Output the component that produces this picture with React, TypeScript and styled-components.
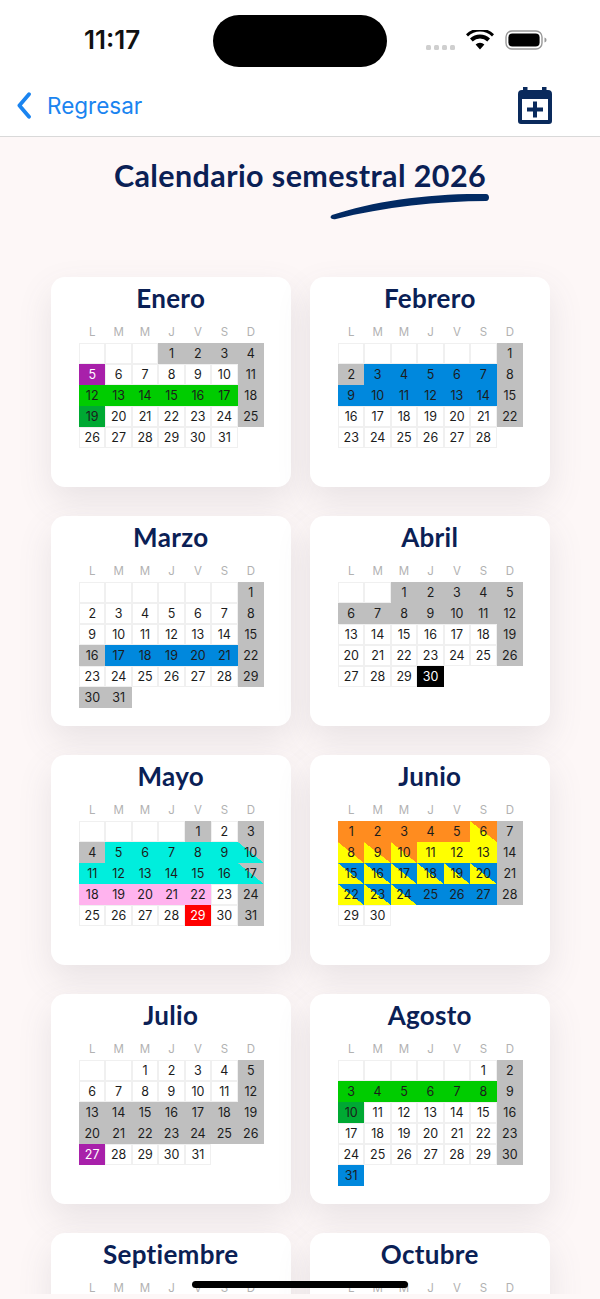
import styled, { createGlobalStyle } from "styled-components";

const GlobalStyle = createGlobalStyle`
  html, body {
    margin: 0;
    padding: 0;
    background: #fdf7f7;
  }
  * {
    box-sizing: border-box;
  }
`;

type Kind =
  | "plain"
  | "gray"
  | "purple"
  | "green"
  | "darkgreen"
  | "blue"
  | "black"
  | "cyan"
  | "pink"
  | "red"
  | "orange"
  | "yellow"
  | "yelloworange"
  | "yellowblue"
  | "cyangray";

const fills: Record<Kind, string> = {
  plain: "#fff",
  gray: "#bfbfbf",
  purple: "#a820aa",
  green: "#00cc00",
  darkgreen: "#00a933",
  blue: "#0088dd",
  black: "#000",
  cyan: "#00eedd",
  pink: "#ffb3ee",
  red: "#ff0000",
  orange: "#ff8c1f",
  yellow: "#ffff00",
  yelloworange: "linear-gradient(to bottom left, #ff8c1f 50%, #ffff00 50.5%)",
  yellowblue: "linear-gradient(to bottom left, #0088dd 50%, #ffff00 50.5%)",
  cyangray: "linear-gradient(to bottom left, #bfbfbf 50%, #00eedd 50.5%)",
};

const Page = styled.div`
  position: relative;
  width: 600px;
  height: 1299px;
  display: flex;
  flex-direction: column;
  overflow: hidden;
  background: #fdf7f7;
  font-family: Lato, "Liberation Sans", sans-serif;
`;

const StatusBar = styled.div`
  height: 78px;
  flex-shrink: 0;
  background: #fff;
  display: flex;
  align-items: flex-start;
  padding: 15px 52px 0 84px;
`;

const Time = styled.div`
  width: 129px;
  margin-top: 9px;
  font-family: Inter, sans-serif;
  font-size: 26px;
  line-height: 32px;
  font-weight: 600;
  color: #111;
`;

const Island = styled.div`
  width: 174px;
  height: 52px;
  border-radius: 26px;
  background: #000;
`;

const StatusIcons = styled.div`
  flex: 1;
  height: 40px;
  margin-top: 5px;
  display: flex;
  align-items: center;
  justify-content: flex-end;
`;

const Dots = styled.div`
  display: flex;
  gap: 3px;
  margin: 14px 11px 0 0;
`;

const Dot = styled.span`
  width: 5px;
  height: 5px;
  border-radius: 1.5px;
  background: #cfcfcf;
`;

const NavBar = styled.div`
  height: 59px;
  flex-shrink: 0;
  background: #fff;
  border-bottom: 1px solid #d9d9d9;
  display: flex;
  align-items: center;
  justify-content: space-between;
  padding: 0 48px 4px 17px;
`;

const BackLink = styled.div`
  display: flex;
  align-items: center;
  gap: 16px;
  color: #1a84f0;
  font-family: Inter, sans-serif;
  font-size: 22.5px;
`;

const Scroller = styled.div`
  flex: 1;
  overflow: hidden;
`;

const Heading = styled.div`
  position: relative;
  height: 140px;
  padding-top: 20px;
  text-align: center;
  color: #0a2055;
  font-size: 30.5px;
  line-height: 36px;
  font-weight: 700;
  letter-spacing: 0.4px;
`;

const Swoosh = styled.svg`
  position: absolute;
  left: 328px;
  top: 52px;
`;

const Months = styled.div`
  display: grid;
  grid-template-columns: repeat(2, 239.5px);
  gap: 29px 19.5px;
  padding-left: 51px;
`;

const Card = styled.div`
  height: 210px;
  background: #fff;
  border-radius: 14px;
  padding-top: 6px;
  box-shadow: 0 14px 34px rgba(90, 90, 110, 0.13);
`;

const MonthName = styled.div`
  text-align: center;
  color: #0a2055;
  font-size: 26px;
  line-height: 30px;
  font-weight: 700;
  letter-spacing: 0.3px;
`;

const Weekdays = styled.div`
  display: grid;
  grid-template-columns: repeat(7, 1fr);
  width: 185px;
  margin: 11px 0 0 28px;
  height: 19px;
`;

const Weekday = styled.span`
  text-align: center;
  color: #b2b2b2;
  font-family: Inter, sans-serif;
  font-size: 11.5px;
  line-height: 16px;
`;

const Days = styled.div`
  display: grid;
  grid-template-columns: repeat(7, 1fr);
  grid-auto-rows: 21px;
  width: 185px;
  margin-left: 28px;
`;

const Day = styled.div<{ $kind: Kind }>`
  display: flex;
  align-items: center;
  justify-content: center;
  font-family: Inter, sans-serif;
  font-size: 12.5px;
  color: ${(p) =>
    p.$kind === "purple" || p.$kind === "black" || p.$kind === "red"
      ? "#fff"
      : "#1c1c1c"};
  background: ${(p) => fills[p.$kind]};
  border: ${(p) => (p.$kind === "plain" ? "1px solid #f0f0f0" : "none")};
`;

const HomeBar = styled.div`
  position: absolute;
  left: 192px;
  top: 1281px;
  width: 216px;
  height: 7px;
  border-radius: 4px;
  background: #000;
`;

const PageFoot = styled.div`
  height: 5px;
  flex-shrink: 0;
  background: #fdf7f7;
`;

const weekdays = ["L", "M", "M", "J", "V", "S", "D"];

// day number -> kind, anything missing is a plain white day
function range(from: number, to: number, kind: Kind) {
  const out: Record<number, Kind> = {};
  for (let d = from; d <= to; d++) out[d] = kind;
  return out;
}

const grays = (days: number[]) =>
  Object.fromEntries(days.map((d) => [d, "gray" as Kind]));

const months: {
  name: string;
  offset: number;
  length: number;
  kinds: Record<number, Kind>;
}[] = [
  {
    name: "Enero",
    offset: 3,
    length: 31,
    kinds: {
      ...grays([1, 2, 3, 4, 11, 18, 25]),
      5: "purple",
      ...range(12, 17, "green"),
      19: "darkgreen",
    },
  },
  {
    name: "Febrero",
    offset: 6,
    length: 28,
    kinds: {
      ...grays([1, 2, 8, 15, 22]),
      ...range(3, 7, "blue"),
      ...range(9, 14, "blue"),
    },
  },
  {
    name: "Marzo",
    offset: 6,
    length: 31,
    kinds: {
      ...grays([1, 8, 15, 16, 22, 29, 30, 31]),
      ...range(17, 21, "blue"),
    },
  },
  {
    name: "Abril",
    offset: 2,
    length: 30,
    kinds: {
      ...range(1, 12, "gray"),
      ...grays([19, 26]),
      30: "black",
    },
  },
  {
    name: "Mayo",
    offset: 4,
    length: 31,
    kinds: {
      ...grays([1, 3, 4, 24, 31]),
      ...range(5, 9, "cyan"),
      10: "cyangray",
      ...range(11, 16, "cyan"),
      17: "cyangray",
      ...range(18, 22, "pink"),
      29: "red",
    },
  },
  {
    name: "Junio",
    offset: 0,
    length: 30,
    kinds: {
      ...range(1, 5, "orange"),
      6: "yelloworange",
      ...grays([7, 14, 21, 28]),
      ...range(8, 10, "yelloworange"),
      ...range(11, 13, "yellow"),
      ...range(15, 20, "yellowblue"),
      ...range(22, 24, "yellowblue"),
      ...range(25, 27, "blue"),
    },
  },
  {
    name: "Julio",
    offset: 2,
    length: 31,
    kinds: {
      ...grays([5, 12]),
      ...range(13, 26, "gray"),
      27: "purple",
    },
  },
  {
    name: "Agosto",
    offset: 5,
    length: 31,
    kinds: {
      ...grays([2, 9, 16, 23, 30]),
      ...range(3, 8, "green"),
      10: "darkgreen",
      31: "blue",
    },
  },
  // only the weekday row of these two is on screen
  { name: "Septiembre", offset: 0, length: 0, kinds: {} },
  { name: "Octubre", offset: 0, length: 0, kinds: {} },
];

function WifiIcon() {
  return (
    <svg width="28" height="20" viewBox="0 0 28 20">
      <path
        d="M14 19.5 9.6 14.6a6.4 6.4 0 0 1 8.8 0Z M6.7 11.5 4 8.6a14.4 14.4 0 0 1 20 0l-2.7 2.9a10.4 10.4 0 0 0-14.6 0Z M2 6.4 0 4.3a20 20 0 0 1 28 0l-2 2.1a17 17 0 0 0-24 0Z"
        fill="#000"
      />
    </svg>
  );
}

function BatteryIcon() {
  return (
    <svg width="43" height="20" viewBox="0 0 43 20" style={{ marginLeft: 11 }}>
      <rect x="1" y="1" width="36" height="18" rx="6" fill="none" stroke="#999" strokeWidth="1.4" />
      <rect x="3.4" y="3.4" width="31.2" height="13.2" rx="4" fill="#000" />
      <path d="M39.5 7.5c1.5.4 2 1.3 2 2.5s-.5 2.1-2 2.5Z" fill="#999" />
    </svg>
  );
}

function BackChevron() {
  return (
    <svg width="14" height="27" viewBox="0 0 14 27">
      <path
        d="M12 2.2 2.4 13.5 12 24.8"
        fill="none"
        stroke="#1a84f0"
        strokeWidth="3.8"
        strokeLinecap="round"
        strokeLinejoin="round"
      />
    </svg>
  );
}

function CalendarPlusIcon() {
  return (
    <svg width="34" height="37" viewBox="0 0 34 37">
      <path
        d="M5 0h4.5v3h14.5V0H28.5v3H30a4 4 0 0 1 4 4v27a3 3 0 0 1-3 3H3a3 3 0 0 1-3-3V7a4 4 0 0 1 4-4h1Z"
        fill="#0a2a5c"
      />
      <rect x="4" y="12" width="26" height="21" fill="#fff" />
      <path d="M15 14.5h4v6h6v4h-6v6h-4v-6H9v-4h6Z" fill="#0a2a5c" />
    </svg>
  );
}

function MonthCard({ month }: { month: (typeof months)[number] }) {
  const blanks = Array.from({ length: month.offset });
  const days = Array.from({ length: month.length }, (_, i) => i + 1);
  return (
    <Card>
      <MonthName>{month.name}</MonthName>
      <Weekdays>
        {weekdays.map((w, i) => (
          <Weekday key={i}>{w}</Weekday>
        ))}
      </Weekdays>
      <Days>
        {blanks.map((_, i) => (
          <Day key={`b${i}`} $kind="plain" />
        ))}
        {days.map((d) => (
          <Day key={d} $kind={month.kinds[d] ?? "plain"}>
            {d}
          </Day>
        ))}
      </Days>
    </Card>
  );
}

export default function App() {
  return (
    <Page>
      <GlobalStyle />
      <StatusBar>
        <Time>11:17</Time>
        <Island />
        <StatusIcons>
          <Dots>
            <Dot />
            <Dot />
            <Dot />
            <Dot />
          </Dots>
          <WifiIcon />
          <BatteryIcon />
        </StatusIcons>
      </StatusBar>
      <NavBar>
        <BackLink>
          <BackChevron />
          Regresar
        </BackLink>
        <CalendarPlusIcon />
      </NavBar>
      <Scroller>
        <Heading>
          Calendario semestral 2026
          <Swoosh width="166" height="34" viewBox="0 0 166 34">
            <path
              d="M4 26C45 12 105 4 158 5c4 0 4 7 0 7C112 12 55 18 8 30c-5 1-7-2-4-4Z"
              fill="#022a63"
            />
          </Swoosh>
        </Heading>
        <Months>
          {months.map((m) => (
            <MonthCard key={m.name} month={m} />
          ))}
        </Months>
      </Scroller>
      <PageFoot />
      <HomeBar />
    </Page>
  );
}
